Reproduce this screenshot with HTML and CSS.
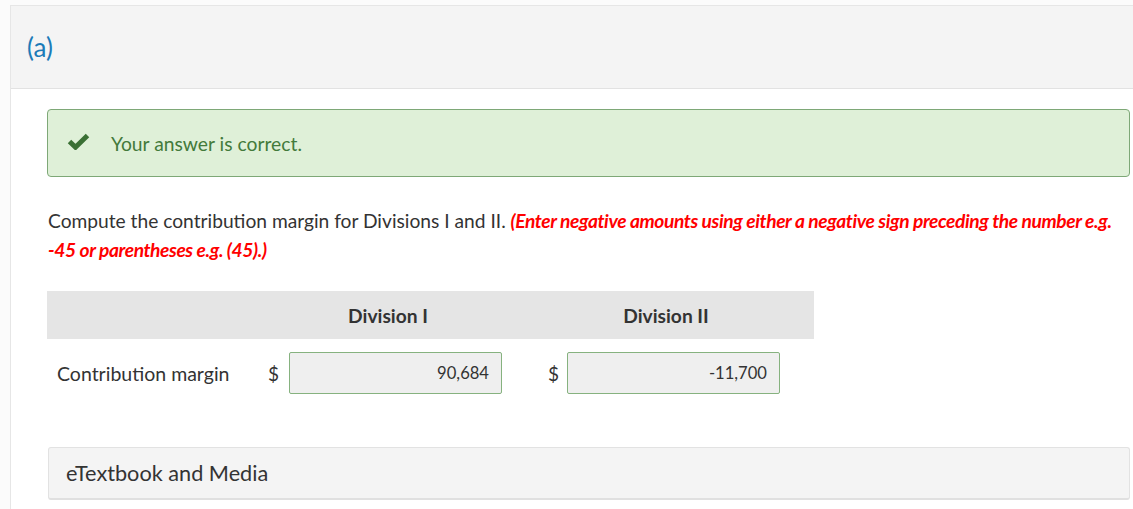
FILE: index.html
```html
<!DOCTYPE html>
<html>
<head>
<meta charset="utf-8">
<link rel="stylesheet" href="styles.css">
</head>
<body>
<div class="wrap">
  <div class="panel">
    <div class="part-head"><span class="part-label">(a)</span></div>
    <div class="part-body">
      <div class="alert">
        <svg class="check" width="23" height="17" viewBox="0 0 23 17"><polyline points="2.5,8.5 8.5,14.2 20.5,2.5" fill="none" stroke="#3a7034" stroke-width="5" stroke-linecap="butt" stroke-linejoin="miter"/></svg>
        <span class="alert-text">Your answer is correct.</span>
      </div>
      <p class="question">Compute the contribution margin for Divisions I and II. <span class="hint">(Enter negative amounts using either a negative sign preceding the number e.g. -45 or parentheses e.g. (45).)</span></p>
      <div class="table">
        <div class="thead">
          <div></div>
          <div class="th">Division I</div>
          <div class="th">Division II</div>
        </div>
        <div class="trow">
          <div class="label">Contribution margin</div>
          <div class="dollar">$</div>
          <div class="input">90,684</div>
          <div></div>
          <div class="dollar d2">$</div>
          <div class="input">-11,700</div>
        </div>
      </div>
      <div class="media">eTextbook and Media</div>
    </div>
  </div>
</div>
</body>
</html>
```
FILE: styles.css
```css
html, body {
  margin: 0;
  padding: 0;
}
body {
  background: #fbfbfb;
  font-family: Lato, "Open Sans", sans-serif;
  color: #333;
}
.wrap {
  padding: 5px 0 0 10px;
}
.panel {
  background: #fff;
  border-left: 1px solid #e6e6e6;
  border-top: 1px solid #e6e6e6;
  min-height: 503px;
}
.part-head {
  height: 82px;
  background: #f4f4f4;
  border-bottom: 1px solid #e2e2e2;
  display: flex;
  align-items: center;
  padding-left: 16px;
}
.part-label {
  color: #1b7bb8;
  font-size: 26px;
  line-height: 1;
  margin-top: 0;
}
.part-body {
  padding: 20px 3px 0 36px;
}
.alert {
  height: 66px;
  background: #dff0d8;
  border: 1px solid #7ea877;
  border-radius: 4px;
  display: flex;
  align-items: center;
  padding-left: 19px;
}
.check {
  display: block;
  margin-top: -4px;
}
.alert-text {
  margin-left: 21px;
  font-size: 19.3px;
  color: #437a3b;
}
.question {
  margin: 29px 0 0 1px;
  font-size: 19.2px;
  line-height: 29px;
  color: #333;
}
.hint {
  color: #f00;
  font-weight: bold;
  font-style: italic;
  letter-spacing: -0.4px;
}
.table {
  margin-top: 27px;
  width: 767px;
}
.thead {
  height: 48px;
  background: #e5e5e5;
  display: grid;
  grid-template-columns: 211px 260px 296px;
  align-items: center;
}
.th {
  text-align: center;
  font-weight: bold;
  font-size: 19.2px;
  color: #333;
}
.trow {
  margin-top: 13px;
  display: grid;
  grid-template-columns: 211px 31px 213px 38px 27px 213px;
  align-items: center;
  height: 42px;
}
.label {
  padding-left: 10px;
  font-size: 19.5px;
  color: #333;
}
.dollar {
  padding-left: 10px;
  font-size: 19px;
  color: #333;
}
.d2 {
  padding-left: 8px;
}
.input {
  box-sizing: border-box;
  height: 42px;
  background: #efefef;
  border: 1.5px solid #86b27f;
  border-radius: 2px;
  display: flex;
  align-items: center;
  justify-content: flex-end;
  padding-right: 12px;
  font-size: 16.6px;
  color: #333;
}
.media {
  margin-top: 53px;
  margin-left: 1px;
  height: 53px;
  box-sizing: border-box;
  background: #f4f4f4;
  border: 1px solid #e2e2e2;
  border-bottom: 2px solid #e0e0e0;
  border-radius: 3px;
  display: flex;
  align-items: center;
  padding-left: 17px;
  font-size: 21.7px;
  color: #333;
}
```
